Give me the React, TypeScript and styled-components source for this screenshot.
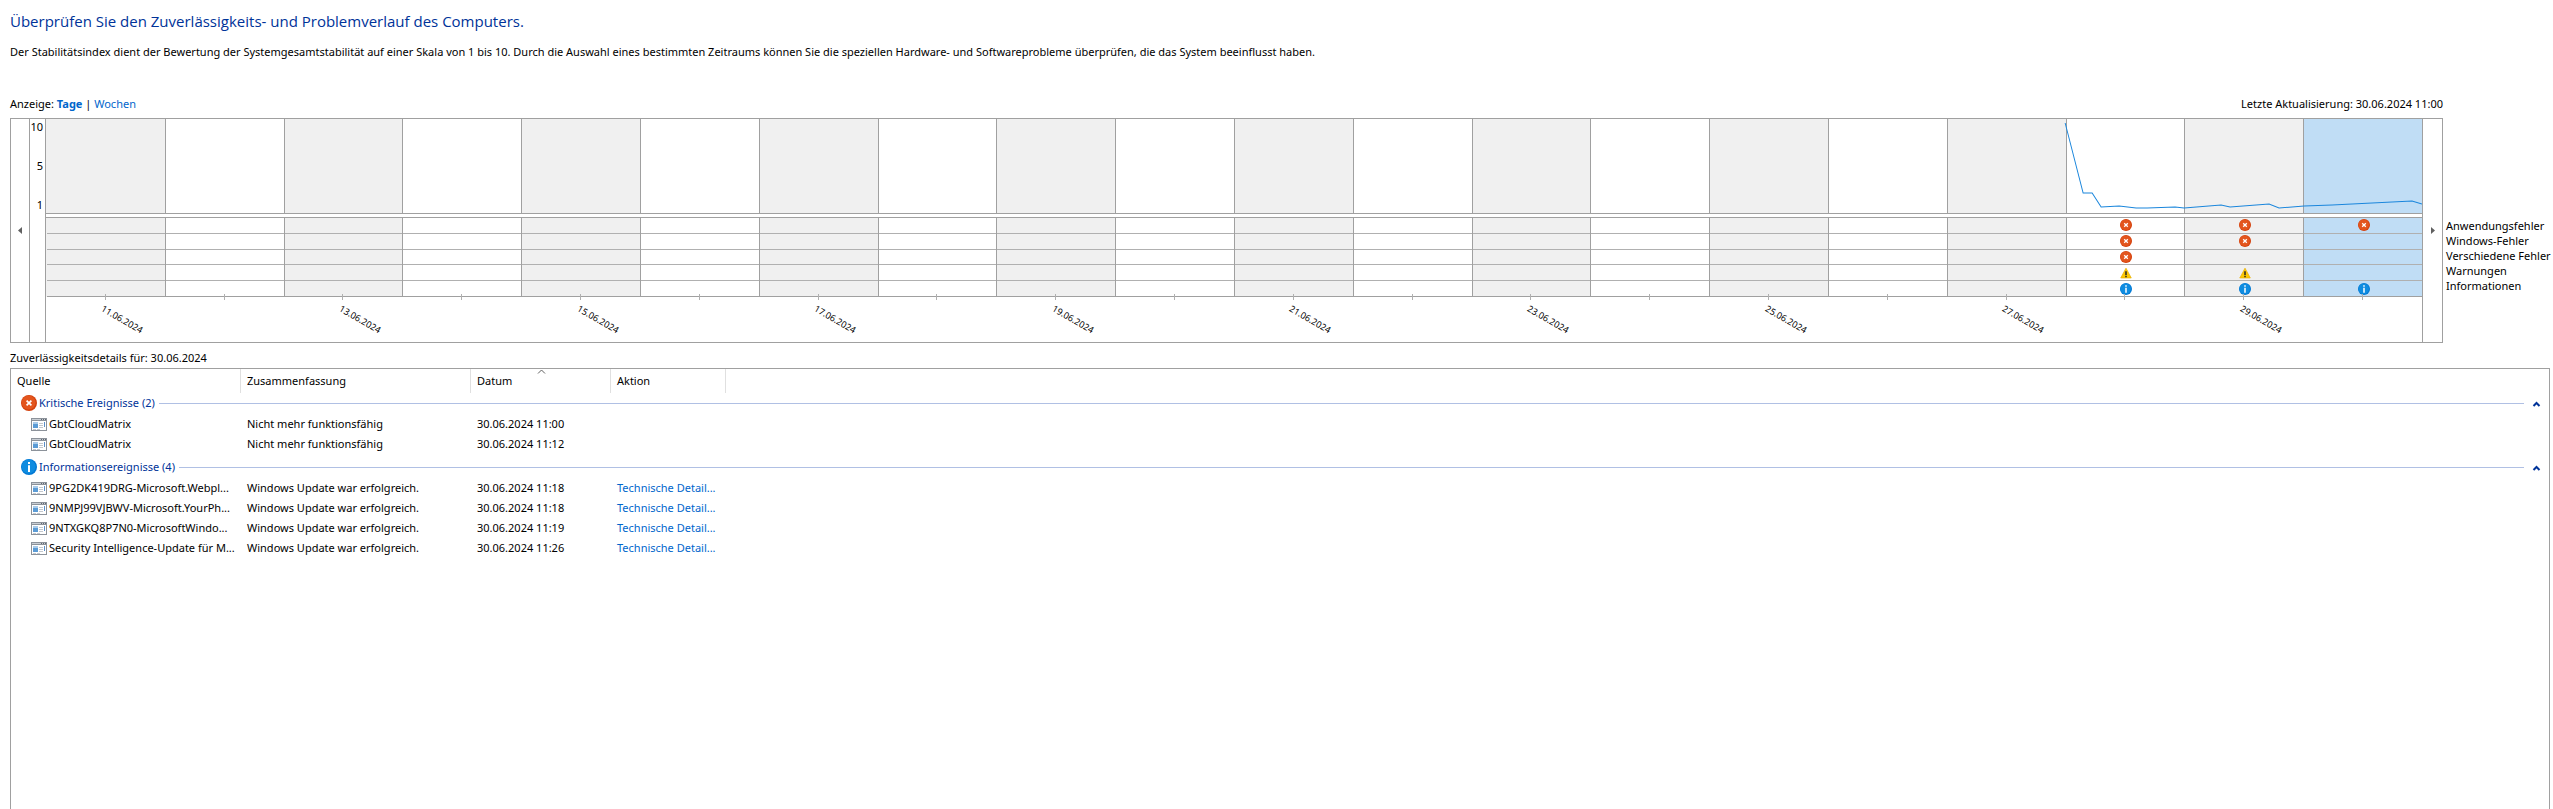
import React, { useState } from "react";
import styled, { createGlobalStyle, css } from "styled-components";

const LINE = "#a0a0a0";
const LINK = "#0066cc";
const HEADING = "#003399";

const GlobalStyle = createGlobalStyle`
  *, *::before, *::after { box-sizing: border-box; }
  body {
    margin: 0;
    background: #fff;
    color: #000;
    font: 11px/16px "Noto Sans", "Open Sans", sans-serif;
  }
  button { font: inherit; color: inherit; background: none; border: 0; padding: 0; cursor: pointer; }
`;

const Page = styled.main`
  display: flex;
  flex-direction: column;
  min-height: 100vh;
  padding: 10px 3px 0 10px;
`;

const Title = styled.h1`
  margin: 0;
  font-family: "Open Sans", "Noto Sans", sans-serif;
  font-size: 15px;
  line-height: 22px;
  font-weight: 400;
  color: ${HEADING};
`;

const Intro = styled.p`
  margin: 12px 0 36px;
`;

const ChartArea = styled.section`
  display: grid;
  grid-template-columns: minmax(0, 1fr) 107px;
`;

const ViewBar = styled.div`
  grid-column: 1;
  display: flex;
  justify-content: space-between;
  height: 22px;
`;

const ViewLink = styled.a<{ $active?: boolean }>`
  color: ${LINK};
  text-decoration: none;
  font-weight: ${(p) => (p.$active ? 700 : 400)};
`;

const Chart = styled.div`
  grid-column: 1;
  display: grid;
  grid-template-columns: 18px 16px minmax(0, 1fr) 19px;
  height: 225px;
  border: 1px solid ${LINE};
`;

const ScrollButton = styled.button`
  display: flex;
  align-items: center;
  justify-content: center;
`;

const Scale = styled.div`
  display: flex;
  flex-direction: column;
  justify-content: space-between;
  height: 94px;
  padding-right: 2px;
  text-align: right;
`;

const ScaleColumn = styled.div`
  border-left: 1px solid ${LINE};
`;

const Plot = styled.div`
  position: relative;
  display: grid;
  grid-template-columns: repeat(20, minmax(0, 1fr));
  border: solid ${LINE};
  border-width: 0 1px;
`;

const Day = styled.button<{ $tone: string }>`
  display: flex;
  flex-direction: column;
  align-items: stretch;
  text-align: left;
  --tone: ${(p) => p.$tone};
  --edge: ${LINE};
  &:first-child { --edge: ${(p) => p.$tone}; }
`;

const cell = css`
  display: block;
  background: var(--tone);
  border-left: 1px solid var(--edge);
`;

const Score = styled.span`
  ${cell}
  height: 94px;
`;

const Gap = styled.span`
  height: 5px;
  border: solid ${LINE};
  border-width: 1px 0;
`;

const Events = styled.span`
  ${cell}
  height: 79px;
  display: grid;
  grid-template-rows: repeat(5, minmax(0, 1fr));
`;

const EventCell = styled.span`
  display: flex;
  align-items: center;
  justify-content: center;
  padding-left: 1px;
  border-bottom: 1px solid #b0b0b0;
  &:last-child { border-color: ${LINE}; }
`;

const Tick = styled.span`
  width: 1px;
  height: 6px;
  margin: -3px auto 0;
  background: #b0b0b0;
`;

const DateLabel = styled.span`
  width: 50%;
  margin: 2px 0 0 calc(50% - 3px);
  font-size: 9px;
  line-height: 12px;
  white-space: nowrap;
  transform: rotate(30deg);
  transform-origin: 0 50%;
`;

const Trend = styled.svg`
  position: absolute;
  top: 0;
  left: 0;
  width: 100%;
  height: 94px;
  pointer-events: none;
`;

const Legend = styled.ul`
  grid-column: 2;
  margin: 100px 0 0;
  padding: 0 0 0 3px;
  list-style: none;
  line-height: 15px;
  white-space: nowrap;
`;

const DetailsCaption = styled.h2`
  margin: 7px 0 2px;
  font-size: 11px;
  line-height: 16px;
  font-weight: 400;
`;

const Details = styled.section`
  flex: 1;
  border: solid ${LINE};
  border-width: 1px 1px 0;
`;

const Table = styled.table`
  width: 100%;
  table-layout: fixed;
  border-collapse: separate;
  border-spacing: 0;
  text-align: left;
`;

const HeadCell = styled.th<{ $width?: number }>`
  position: relative;
  width: ${(p) => (p.$width ? `${p.$width}px` : "auto")};
  height: 24px;
  padding: 0 6px;
  font-weight: 400;
  border-right: ${(p) => (p.$width ? "1px solid #e0e0e0" : "0")};
`;

const SortMark = styled.svg`
  position: absolute;
  top: 0;
  left: 50%;
  margin-left: -4px;
`;

const GroupCell = styled.th`
  height: 21px;
  padding: 0 8px 3px 10px;
  font-weight: 400;
  color: ${HEADING};
  vertical-align: bottom;
  tbody + tbody & { height: 24px; }
`;

const GroupBar = styled.div`
  display: flex;
  align-items: center;
  gap: 2px;
  height: 16px;
`;

const Rule = styled.span`
  flex: 1;
  height: 1px;
  margin: 0 6px 0 2px;
  background: #b0c0e4;
`;

const Cell = styled.td`
  height: 20px;
  padding: 0 0 0 6px;
  white-space: nowrap;
`;

const Source = styled.span`
  display: flex;
  align-items: center;
  gap: 2px;
  padding-left: 14px;
  svg { flex: none; }
`;

type Kind = "error" | "warning" | "info";

function StatusIcon({ kind, size }: { kind: Kind; size: number }) {
  if (kind === "warning") {
    return (
      <svg width={size} height={size} viewBox="0 0 16 16" aria-label="Warnung">
        <path d="M8 1.6 15 14.6H1Z" fill="#fcc803" stroke="#eab000" strokeWidth="1" strokeLinejoin="round" />
        <path d="M7 5.5h2v5H7zM7 11.6h2v1.9H7z" fill="#222" />
      </svg>
    );
  }
  if (kind === "error") {
    return (
      <svg width={size} height={size} viewBox="0 0 16 16" aria-label="Fehler">
        <circle cx="8" cy="8" r="8" fill="#d4400c" />
        <circle cx="7.6" cy="7.6" r="7" fill="#e3551d" />
        <path d="M5.6 5.6l4.8 4.8M10.4 5.6l-4.8 4.8" stroke="#fff" strokeWidth="1.7" />
      </svg>
    );
  }
  return (
    <svg width={size} height={size} viewBox="0 0 16 16" aria-label="Information">
      <circle cx="8" cy="8" r="8" fill="#0078d4" />
      <circle cx="7.6" cy="7.6" r="7" fill="#0f8ce0" />
      <path d="M7 3h2v2H7zM7 6.2h2V13H7z" fill="#fff" />
    </svg>
  );
}

function AppIcon() {
  return (
    <svg width="16" height="13" viewBox="0 0 16 13" shapeRendering="crispEdges" aria-hidden="true">
      <path d="M0 0h16v13H0z" fill="#8c929a" />
      <path d="M1 3h14v9H1z" fill="#fff" />
      <path d="M1 1h14v1H1z" fill="#c9ced4" />
      <path d="M10 1h1v1h-1zM12 1h1v1h-1zM14 1h1v1h-1z" fill="#5f6770" />
      <path d="M2 4h5v6H2z" fill="#a9cbea" />
      <path d="M2 6h5v4H2z" fill="#5b9bd5" />
      <path d="M8 5h4v1H8zM8 7h4v1H8zM8 9h4v1H8zM2 11h3v1H2zM6 11h3v1H6z" fill="#c3c8ce" />
      <path d="M13 4h1v5h-1z" fill="#5b8fc9" />
    </svg>
  );
}

const legend = ["Anwendungsfehler", "Windows-Fehler", "Verschiedene Fehler", "Warnungen", "Informationen"];

const events: Record<number, (Kind | null)[]> = {
  17: ["error", "error", "error", "warning", "info"],
  18: ["error", "error", null, "warning", "info"],
  19: ["error", null, null, null, "info"],
};

const days = Array.from({ length: 20 }, (_, i) => ({
  date: `${i + 11}.06.2024`,
  events: events[i] ?? [null, null, null, null, null],
}));

const trend =
  "2020,4 2038,74 2047,74 2056,88 2074,87 2091,89 2102,89 2130,88 2139,89 2176,86 2185,88 2224,85 2234,89 2259,87 2287,86 2367,82 2377,85";

interface Entry {
  source: string;
  summary: string;
  date: string;
  action?: string;
}

const groups: { title: string; kind: Kind; entries: Entry[] }[] = [
  {
    title: "Kritische Ereignisse (2)",
    kind: "error",
    entries: [
      { source: "GbtCloudMatrix", summary: "Nicht mehr funktionsfähig", date: "30.06.2024 11:00" },
      { source: "GbtCloudMatrix", summary: "Nicht mehr funktionsfähig", date: "30.06.2024 11:12" },
    ],
  },
  {
    title: "Informationsereignisse (4)",
    kind: "info",
    entries: [
      ["9PG2DK419DRG-Microsoft.Webpl...", "11:18"],
      ["9NMPJ99VJBWV-Microsoft.YourPh...", "11:18"],
      ["9NTXGKQ8P7N0-MicrosoftWindo...", "11:19"],
      ["Security Intelligence-Update für M...", "11:26"],
    ].map(([source, time]) => ({
      source,
      summary: "Windows Update war erfolgreich.",
      date: `30.06.2024 ${time}`,
      action: "Technische Detail...",
    })),
  },
];

export default function App() {
  const [selected, setSelected] = useState(19);
  const [collapsed, setCollapsed] = useState<Record<string, boolean>>({});

  return (
    <Page>
      <GlobalStyle />
      <Title>Überprüfen Sie den Zuverlässigkeits- und Problemverlauf des Computers.</Title>
      <Intro>
        Der Stabilitätsindex dient der Bewertung der Systemgesamtstabilität auf einer Skala von 1 bis 10. Durch die
        Auswahl eines bestimmten Zeitraums können Sie die speziellen Hardware- und Softwareprobleme überprüfen, die das
        System beeinflusst haben.
      </Intro>

      <ChartArea>
        <ViewBar>
          <span>
            Anzeige: <ViewLink href="#tage" $active>Tage</ViewLink> | <ViewLink href="#wochen">Wochen</ViewLink>
          </span>
          <span>Letzte Aktualisierung: 30.06.2024 11:00</span>
        </ViewBar>
        <Chart>
          <ScrollButton aria-label="Zurück">
            <svg width="4" height="7" viewBox="0 0 4 7"><path d="M4 0v7L0 3.5Z" fill="#606060" /></svg>
          </ScrollButton>
          <ScaleColumn>
            <Scale>
              <span>10</span>
              <span>5</span>
              <span>1</span>
            </Scale>
          </ScaleColumn>
          <Plot>
            {days.map((day, i) => (
              <Day
                key={day.date}
                aria-pressed={i === selected}
                aria-label={day.date}
                onClick={() => setSelected(i)}
                $tone={i === selected ? "#c0ddf5" : i % 2 === 0 ? "#f0f0f0" : "#fff"}
              >
                <Score />
                <Gap />
                <Events>
                  {day.events.map((kind, row) => (
                    <EventCell key={row}>{kind && <StatusIcon kind={kind} size={12} />}</EventCell>
                  ))}
                </Events>
                <Tick />
                {i % 2 === 0 && <DateLabel>{day.date}</DateLabel>}
              </Day>
            ))}
            <Trend viewBox="0 0 2377 94" preserveAspectRatio="none" aria-hidden="true">
              <polyline points={trend} fill="none" stroke="#1a86dc" strokeWidth="1" vectorEffect="non-scaling-stroke" />
            </Trend>
          </Plot>
          <ScrollButton aria-label="Weiter">
            <svg width="4" height="7" viewBox="0 0 4 7"><path d="M0 0v7L4 3.5Z" fill="#606060" /></svg>
          </ScrollButton>
        </Chart>
        <Legend>
          {legend.map((name) => (
            <li key={name}>{name}</li>
          ))}
        </Legend>
      </ChartArea>

      <DetailsCaption>Zuverlässigkeitsdetails für: {days[selected].date}</DetailsCaption>
      <Details>
        <Table>
          <thead>
            <tr>
              <HeadCell $width={230}>Quelle</HeadCell>
              <HeadCell $width={230}>Zusammenfassung</HeadCell>
              <HeadCell $width={140}>
                Datum
                <SortMark width="9" height="5" viewBox="0 0 9 5">
                  <path d="M1 4.5 4.5 1 8 4.5" fill="none" stroke="#606060" />
                </SortMark>
              </HeadCell>
              <HeadCell $width={115}>Aktion</HeadCell>
              <HeadCell />
            </tr>
          </thead>
          {groups.map((group) => (
            <tbody key={group.title}>
              <tr>
                <GroupCell colSpan={5}>
                  <GroupBar>
                    <StatusIcon kind={group.kind} size={16} />
                    {group.title}
                    <Rule />
                    <button
                      aria-label={group.title}
                      aria-expanded={!collapsed[group.title]}
                      onClick={() => setCollapsed((c) => ({ ...c, [group.title]: !c[group.title] }))}
                    >
                      <svg width="9" height="6" viewBox="0 0 9 6">
                        <path d="M1.5 5 4.5 2 7.5 5" fill="none" stroke={HEADING} strokeWidth="2" />
                      </svg>
                    </button>
                  </GroupBar>
                </GroupCell>
              </tr>
              {!collapsed[group.title] &&
                group.entries.map((entry, i) => (
                  <tr key={i}>
                    <Cell>
                      <Source>
                        <AppIcon />
                        {entry.source}
                      </Source>
                    </Cell>
                    <Cell>{entry.summary}</Cell>
                    <Cell>{entry.date}</Cell>
                    <Cell>{entry.action && <ViewLink href="#details">{entry.action}</ViewLink>}</Cell>
                    <Cell />
                  </tr>
                ))}
            </tbody>
          ))}
        </Table>
      </Details>
    </Page>
  );
}
